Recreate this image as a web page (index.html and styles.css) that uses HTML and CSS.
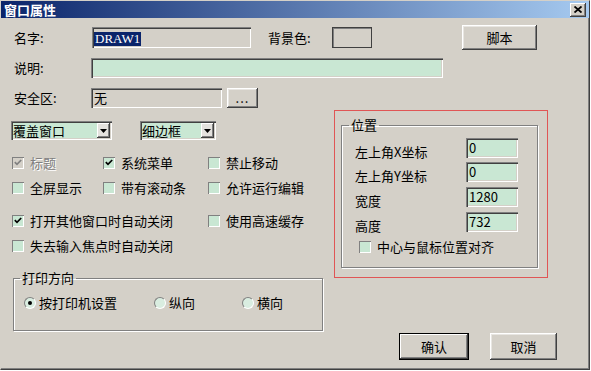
FILE: index.html
```html
<!DOCTYPE html>
<html lang="zh-CN">
<head>
  <meta charset="UTF-8">
  <title>窗口属性</title>
  <link rel="stylesheet" href="styles.css">
</head>
<body>

  <div class="dialog">
    <!-- Title bar -->
    <div class="titlebar">
      <span class="title">窗口属性</span>
      <button class="close-btn">
        <svg width="8" height="7" viewBox="0 0 8 7"><path d="M0.5 0.5 L7.5 6.5 M7.5 0.5 L0.5 6.5" stroke="#000" stroke-width="1.8" fill="none"/></svg>
      </button>
    </div>

    <div class="content">
      <div class="row row-name">
        <span class="lbl">名字:</span>
        <div class="field field-name"><span class="selected">DRAW1</span></div>
        <span class="lbl lbl-bg">背景色:</span>
        <div class="swatch"></div>
        <button class="btn btn-script">脚本</button>
      </div>

      <div class="row row-desc">
        <span class="lbl">说明:</span>
        <div class="field field-desc green"></div>
      </div>

      <div class="row row-safe">
        <span class="lbl">安全区:</span>
        <div class="field field-safe">无</div>
        <button class="btn btn-more">...</button>
      </div>

      <div class="main">
        <div class="left-col">
          <div class="selects">
            <div class="combo combo-cover">
              <span class="combo-text">覆盖窗口</span>
              <span class="combo-btn"><svg width="7" height="4" viewBox="0 0 7 4"><polygon points="0,0 7,0 3.5,4" fill="#000"/></svg></span>
            </div>
            <div class="combo combo-border">
              <span class="combo-text">细边框</span>
              <span class="combo-btn"><svg width="7" height="4" viewBox="0 0 7 4"><polygon points="0,0 7,0 3.5,4" fill="#000"/></svg></span>
            </div>
          </div>

          <div class="checks">
            <label class="chk disabled"><span class="box gray"><svg width="8" height="7" viewBox="0 0 8 7"><path d="M0.8 3.2 L3 5.4 L7.2 1" stroke="#808080" stroke-width="1.7" fill="none"/></svg></span>标题</label>
            <label class="chk"><span class="box"><svg width="8" height="7" viewBox="0 0 8 7"><path d="M0.8 3.2 L3 5.4 L7.2 1" stroke="#000" stroke-width="1.7" fill="none"/></svg></span>系统菜单</label>
            <label class="chk"><span class="box"></span>禁止移动</label>
            <label class="chk"><span class="box"></span>全屏显示</label>
            <label class="chk"><span class="box"></span>带有滚动条</label>
            <label class="chk"><span class="box"></span>允许运行编辑</label>
          </div>

          <div class="checks checks-close">
            <label class="chk wide"><span class="box"><svg width="8" height="7" viewBox="0 0 8 7"><path d="M0.8 3.2 L3 5.4 L7.2 1" stroke="#000" stroke-width="1.7" fill="none"/></svg></span>打开其他窗口时自动关闭</label>
            <label class="chk"><span class="box"></span>使用高速缓存</label>
            <label class="chk wide"><span class="box"></span>失去输入焦点时自动关闭</label>
          </div>

          <fieldset class="group print-group">
            <legend>打印方向</legend>
            <div class="radios">
              <label class="radio r1"><span class="dot on"></span>按打印机设置</label>
              <label class="radio r2"><span class="dot"></span>纵向</label>
              <label class="radio r3"><span class="dot"></span>横向</label>
            </div>
          </fieldset>
        </div>

        <div class="right-col">
          <div class="redbox">
            <fieldset class="group pos-group">
              <legend>位置</legend>
              <div class="pos-row"><span class="pos-lbl">左上角X坐标</span><div class="field green pos-field">0</div></div>
              <div class="pos-row"><span class="pos-lbl">左上角Y坐标</span><div class="field green pos-field">0</div></div>
              <div class="pos-row"><span class="pos-lbl">宽度</span><div class="field green pos-field">1280</div></div>
              <div class="pos-row"><span class="pos-lbl">高度</span><div class="field green pos-field">732</div></div>
              <label class="chk pos-chk"><span class="box"></span>中心与鼠标位置对齐</label>
            </fieldset>
          </div>

          <div class="actions">
            <button class="btn btn-ok">确认</button>
            <button class="btn btn-cancel">取消</button>
          </div>
        </div>
      </div>
    </div>
  </div>

</body>
</html>
```

FILE: styles.css
```css
* {
  box-sizing: border-box;
}

body {
  margin: 0;
  background-color: #ffffff;
  font-family: "Noto Sans CJK SC", "Liberation Sans", sans-serif;
  font-size: 13px;
  line-height: 16px;
  color: #000;
}

.dialog {
  width: 590px;
  height: 370px;
  background-color: #d4d0c8;
  border-top: 1px solid #d4d0c8;
  border-left: 1px solid #d4d0c8;
  border-right: 1px solid #404040;
  border-bottom: 1px solid #404040;
  box-shadow: inset -1px -1px #808080;
}

.titlebar {
  height: 17px;
  display: flex;
  align-items: center;
  justify-content: space-between;
  padding: 0 3px 0 3px;
  background: linear-gradient(to right, #0a246a, #a6caf0);
}

.title {
  color: #fff;
  font-weight: bold;
  line-height: 17px;
}

.close-btn {
  width: 16px;
  height: 14px;
  padding: 0;
  border: none;
  background-color: #d4d0c8;
  display: flex;
  align-items: center;
  justify-content: center;
  box-shadow: inset -1px -1px #404040, inset 1px 1px #fff, inset -2px -2px #808080;
}

.content {
  padding: 7px 0 0 10px;
}

.row {
  display: flex;
  align-items: center;
}

.row-name {
  height: 25px;
}

.row-desc {
  height: 21px;
  margin-top: 7px;
}

.row-safe {
  height: 21px;
  margin-top: 9px;
}

.lbl {
  width: 80px;
  padding-left: 3px;
  flex-shrink: 0;
}

.field {
  height: 20px;
  padding: 2px 0 0 3px;
  background-color: #d4d0c8;
  box-shadow: inset 1px 1px #808080, inset 2px 2px #404040, inset -1px -1px #fff, inset -2px -2px #d4d0c8;
  flex-shrink: 0;
}

.green {
  background-color: #c9e7d3;
}

.field-name {
  width: 159px;
  height: 21px;
  margin-left: 1px;
  padding-top: 3px;
  padding-left: 2px;
}

.selected {
  display: inline-block;
  font-family: "Liberation Serif", serif;
  font-size: 13px;
  line-height: 14px;
  padding: 0 1px;
  background-color: #0a246a;
  color: #fff;
}

.lbl-bg {
  width: 64px;
  margin-left: 17px;
  padding-left: 0;
}

.swatch {
  width: 40px;
  height: 21px;
  border: 1px solid #404040;
  box-shadow: inset 1px 1px #808080;
  background-color: #d4d0c8;
}

.btn {
  padding: 0;
  border: none;
  background-color: #d4d0c8;
  font-family: inherit;
  font-size: 13px;
  color: #000;
  box-shadow: inset -1px -1px #404040, inset 1px 1px #fff, inset -2px -2px #808080, inset 2px 2px #e8e6e2;
}

.btn-script {
  width: 75px;
  height: 25px;
  margin-left: 90px;
}

.field-desc {
  width: 352px;
}

.field-safe {
  width: 131px;
}

.btn-more {
  width: 31px;
  height: 20px;
  margin-left: 5px;
  line-height: 12px;
  letter-spacing: 1px;
}

.main {
  display: flex;
  margin-top: 2px;
}

.left-col {
  width: 312px;
  flex-shrink: 0;
}

.selects {
  display: flex;
  margin-top: 11px;
}

.combo {
  height: 19px;
  display: flex;
  align-items: center;
  justify-content: space-between;
  padding: 0 2px 0 2px;
  background-color: #c9e7d3;
  box-shadow: inset 1px 1px #808080, inset 2px 2px #404040, inset -1px -1px #fff, inset -2px -2px #d4d0c8;
}

.combo-cover {
  width: 101px;
}

.combo-border {
  width: 76px;
  margin-left: 28px;
}

.combo-text {
  padding-top: 1px;
}

.combo-btn {
  width: 13px;
  height: 15px;
  display: flex;
  align-items: center;
  justify-content: center;
  background-color: #e4e2de;
  box-shadow: inset -1px -1px #404040, inset 1px 1px #fff, inset -2px -2px #808080;
}

.checks {
  display: grid;
  grid-template-columns: 91px 105px 1fr;
  grid-auto-rows: 25px;
  margin-top: 10px;
}

.checks-close {
  grid-template-columns: 196px 1fr;
  margin-top: 8px;
}

.chk {
  display: flex;
  align-items: center;
  padding-left: 1px;
  white-space: nowrap;
}

.box {
  width: 12px;
  height: 12px;
  margin-right: 6px;
  display: flex;
  align-items: center;
  justify-content: center;
  background-color: #c9e7d3;
  box-shadow: inset 1px 1px #808080, inset -1px -1px #fff;
  flex-shrink: 0;
}

.box.gray {
  background-color: #d4d0c8;
}

.chk.disabled {
  color: #808080;
  text-shadow: 1px 1px #fff;
}

.group {
  margin: 0;
  padding: 0;
  min-width: 0;
  border: 1px solid #808080;
  box-shadow: inset 1px 1px #fff, 1px 1px #fff;
}

.group legend {
  padding: 0 2px;
  line-height: 16px;
}

.print-group {
  width: 310px;
  height: 61px;
  margin: 12px 0 0 2px;
}

.print-group legend {
  margin-left: 6px;
}

.radios {
  display: flex;
  padding: 8px 0 0 10px;
}

.radio {
  display: flex;
  align-items: center;
  height: 17px;
}

.r1 {
  width: 130px;
}

.r2 {
  width: 88px;
}

.dot {
  width: 12px;
  height: 12px;
  margin-right: 3px;
  border-radius: 50%;
  border: 1px solid;
  border-color: #808080 #fff #fff #808080;
  background-color: #d9ede0;
  display: flex;
  align-items: center;
  justify-content: center;
}

.dot.on::after {
  content: "";
  width: 4px;
  height: 4px;
  border-radius: 50%;
  background-color: #000;
}

.right-col {
  width: 223px;
  margin-left: 11px;
  flex-shrink: 0;
}

.redbox {
  width: 214px;
  height: 168px;
  border: 1px solid #e05555;
  padding: 6px 0 0 6px;
}

.pos-group {
  width: 197px;
  height: 151px;
  padding: 5px 0 0 13px;
}

.pos-group legend {
  margin-left: -6px;
}

.pos-row {
  display: flex;
  height: 25px;
}

.pos-row:first-of-type {
  height: 24px;
}

.pos-lbl {
  width: 111px;
  padding-top: 6px;
}

.pos-field {
  width: 52px;
  height: 20px;
}

.pos-chk {
  margin: 2px 0 0 3px;
  height: 16px;
}

.actions {
  display: flex;
  margin: 55px 0 0 65px;
}

.btn-ok {
  width: 70px;
  height: 27px;
  border: 1px solid #000;
  box-shadow: inset -1px -1px #404040, inset 1px 1px #fff, inset -2px -2px #808080;
}

.btn-cancel {
  width: 67px;
  height: 27px;
  margin-left: 21px;
}
```
